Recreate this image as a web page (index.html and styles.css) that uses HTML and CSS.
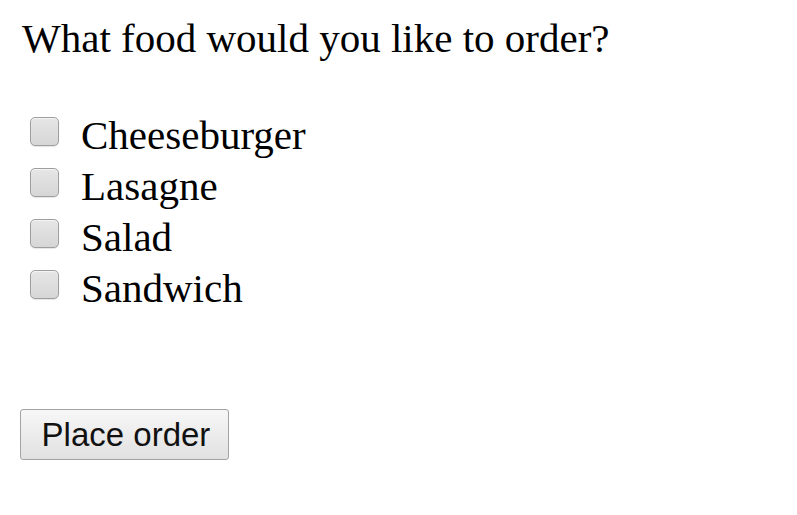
FILE: index.html
```html
<!DOCTYPE html>
<html>
<head>
<meta charset="utf-8">
<link rel="stylesheet" href="styles.css">
</head>
<body>
<form class="order">
  <p class="question">What food would you like to order?</p>
  <div class="options">
    <label class="option"><input type="checkbox" class="box"><span class="name">Cheeseburger</span></label>
    <label class="option"><input type="checkbox" class="box"><span class="name">Lasagne</span></label>
    <label class="option"><input type="checkbox" class="box"><span class="name">Salad</span></label>
    <label class="option"><input type="checkbox" class="box"><span class="name">Sandwich</span></label>
  </div>
  <button type="button" class="submit">Place order</button>
</form>
</body>
</html>
```
FILE: styles.css
```css
html, body {
  margin: 0;
  padding: 0;
  background: #ffffff;
}
body {
  font-family: "Liberation Serif", "Times New Roman", serif;
  color: #000;
}
.order {
  display: flex;
  flex-direction: column;
  align-items: flex-start;
  padding: 15px 0 0 20px;
}
.question {
  margin: 0;
  font-size: 41px;
  line-height: 47px;
  padding-left: 2px;
}
.options {
  display: flex;
  flex-direction: column;
  margin-top: 48px;
}
.option {
  display: flex;
  align-items: flex-start;
  height: 51px;
  font-size: 41px;
  line-height: 51px;
}
.box {
  appearance: none;
  -webkit-appearance: none;
  width: 29px;
  height: 29px;
  margin: 7px 22px 0 10px;
  border: 1px solid #9e9e9e;
  border-radius: 5px;
  background: linear-gradient(#e6e6e6, #d6d6d6);
  box-shadow: inset 0 1px 1px rgba(255,255,255,0.6), 0 1px 1px rgba(0,0,0,0.1);
  box-sizing: border-box;
}
.name {
  display: block;
}
.submit {
  margin-top: 95px;
  width: 209px;
  height: 51px;
  box-sizing: border-box;
  border: 1px solid #a3a3a3;
  border-radius: 3px;
  background: linear-gradient(#f7f7f7, #e1e1e1);
  font-family: "Liberation Sans", Arial, sans-serif;
  font-size: 33px;
  line-height: 49px;
  color: #111;
  padding: 0 0 0 3px;
  text-align: center;
}
```
